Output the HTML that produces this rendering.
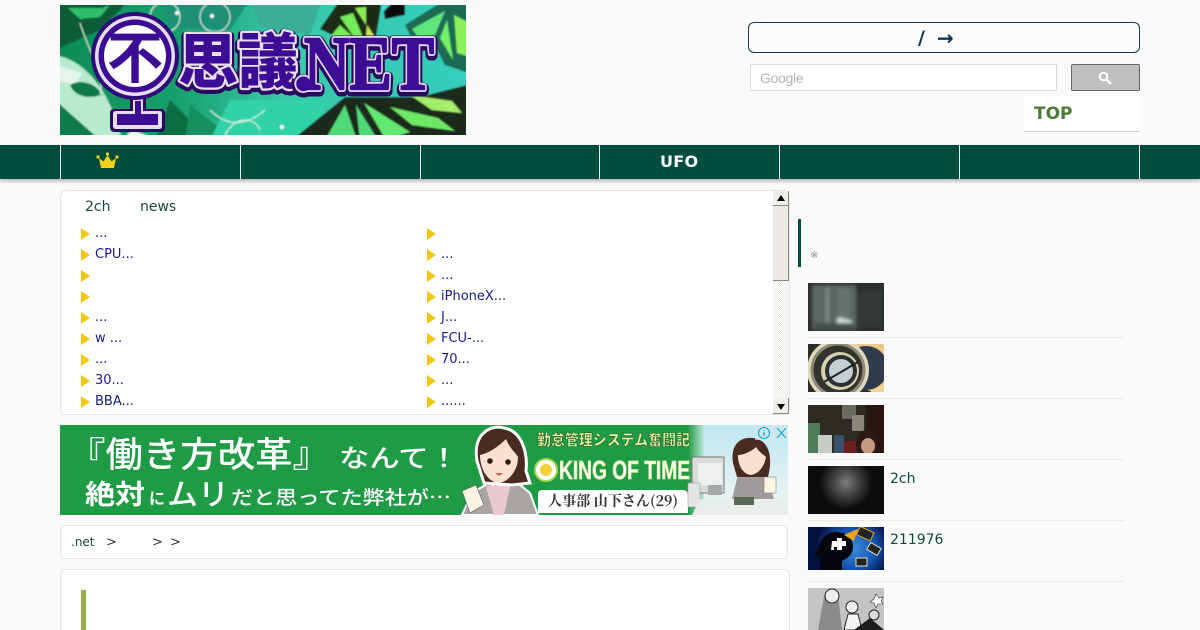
<!DOCTYPE html>
<html lang="ja"><head><meta charset="utf-8"><title>不思議.NET</title>
<style>
html,body{margin:0;padding:0;width:1200px;height:630px;overflow:hidden;background:#fafafa;font-family:"DejaVu Sans","Noto Sans CJK JP",sans-serif}
#w{position:relative;width:1200px;height:630px;overflow:hidden}
.a{position:absolute}
#nav{left:0;top:145px;width:1200px;height:34px;background:#004d40;box-shadow:0 2px 4px rgba(0,0,0,.3)}
#nav i{position:absolute;top:0;width:1px;height:34px;background:#e8efed}
.box{background:#fff;border:1px solid #e4e4e4;border-radius:6px;box-sizing:border-box}
.l{position:absolute;font-size:13px;line-height:18px;color:#1a1a8c;white-space:nowrap}
.t{position:absolute;width:0;height:0;margin-top:-1px;border-left:9px solid #f3c614;border-top:6.5px solid transparent;border-bottom:6.5px solid transparent}
.sep{position:absolute;left:808px;width:316px;height:1px;background:#e9e9e9}
.th{position:absolute;left:808px;width:76px;overflow:hidden}
.s{position:absolute;left:890px;font-size:14px;line-height:20px;color:#0d4a3d}
</style></head><body><div id="w">

<!-- logo -->
<svg class="a" style="left:60px;top:5px" width="406" height="130" viewBox="0 0 406 130">
<defs>
<linearGradient id="bg" x1="0" y1="0" x2="1" y2="0"><stop offset="0" stop-color="#0d8a52"/><stop offset=".3" stop-color="#17a06e"/><stop offset=".55" stop-color="#38c9a8"/><stop offset="1" stop-color="#34cdbd"/></linearGradient>
<filter id="bl" x="-5%" y="-5%" width="110%" height="110%"><feGaussianBlur stdDeviation=".7"/></filter>
<clipPath id="lc"><rect width="406" height="130"/></clipPath>
</defs>
<g clip-path="url(#lc)"><g filter="url(#bl)">
<rect x="-10" y="-10" width="426" height="150" fill="url(#bg)"/>
<path d="M-5 -5H70L40 25 -5 45Z" fill="#0a5c38"/><path d="M8 3H42L50 0 40 12 20 14Z" fill="#2fbf6d"/>
<path d="M-5 50C25 55 50 85 62 135H-5Z" fill="#b8ead0"/><path d="M-5 95L40 135H-5Z" fill="#0d7c48"/><path d="M-5 60L22 68 15 80 -5 75Z" fill="#e4f6ec"/>
<path d="M10 80C22 73 38 80 42 90 28 94 15 92 10 80Z" fill="#0e7a45"/>
<path d="M95 135L110 95 150 135Z" fill="#0c6d42"/><path d="M125 135L130 100 175 135Z" fill="#13905e"/><path d="M62 135L72 125 100 135Z" fill="#e8f6ee"/>
<path d="M100 -5H190L170 25 110 22Z" fill="#1f8f74"/><path d="M190 -5H262L250 30 200 22Z" fill="#3aae96"/>
<path d="M170 95H270L240 135H150Z" fill="#33d2a8"/>
<g fill="none" stroke="#dff5ea" stroke-width="1"><circle cx="105" cy="12" r="15"/><circle cx="155" cy="12" r="15"/><path d="M150 105C170 125 190 118 205 105"/><path d="M20 18C30 50 45 70 40 90"/><path d="M165 130C175 110 195 112 200 125"/></g>
<circle cx="117" cy="8" r="2" fill="#fff"/><circle cx="152" cy="11" r="2" fill="#fff"/><circle cx="222" cy="122" r="2" fill="#fff"/>
<!-- butterflies -->
<path d="M260 24L280 -5H322L316 32 285 36Z" fill="#1f2a15"/>
<path d="M270 32L280 20 293 32Z" fill="#74ec5a"/><path d="M280 12L293 8 303 32H294Z" fill="#74ec5a"/><path d="M295 3L306 2 306 20Z" fill="#8cec55"/><path d="M307 20L315 32H306Z" fill="#c8e85a"/>
<path d="M345 20L385 -5H415V70L385 60 372 35 350 30Z" fill="#1a6a52"/><path d="M352 24L385 6 375 30 358 32Z" fill="#5fe67a"/><path d="M387 15L393 55 380 33Z" fill="#73f06a"/><path d="M394 10L410 18V52L397 48Z" fill="#8cf05a"/>
<path d="M322 -5H345V10L325 14Z" fill="#111"/><path d="M320 -5H335L322 8Z" fill="#3ad7d2"/>
<path d="M232 135L285 92H360L415 78V135Z" fill="#1a2a1d"/>
<path d="M265 135L285 100 297 135Z" fill="#4fdc78"/><path d="M300 135L296 100 318 135Z" fill="#4fdc78"/><path d="M326 135L304 98 350 127Z" fill="#62e86f"/><path d="M330 102L378 113 395 126 352 120Z" fill="#6ee965"/><path d="M350 90L392 96 402 108 372 105Z" fill="#a4ef6a"/>
</g></g>
<!-- globe -->
<path d="M70 90H86V104H101Q105 104 105 108V122Q105 127 100 127H55Q50 127 50 122V108Q50 104 54 104H70Z" fill="#2a0a5e"/>
<path d="M73 92H83V106H100Q102 106 102 109V121Q102 124 99 124H56Q53 124 53 121V109Q53 106 56 106H73Z" fill="#e6dcee"/>
<path d="M75 96H81V109H98V120H57V109H75Z" fill="#3d0c94"/>
<circle cx="75" cy="51" r="44" fill="#2f0a78"/>
<circle cx="75" cy="51" r="40" fill="#e6dcee"/>
<circle cx="75" cy="51" r="36.5" fill="#3d0c94"/>
<circle cx="75" cy="51" r="31" fill="#fff"/>
<text x="75" y="73" text-anchor="middle" font-size="56" font-weight="700" fill="#3d0c94" font-family="'Noto Sans CJK JP',sans-serif">不</text>
<!-- title -->
<g font-family="'Noto Sans CJK JP','Noto Serif CJK SC',sans-serif" font-weight="900" stroke-linejoin="round">
<g fill="#2a0a5e" stroke="#2a0a5e" stroke-width="9"><text x="118" y="80" font-size="60">思</text><text x="178" y="80" font-size="60">議</text></g>
<g fill="#e8e0f0" stroke="#e8e0f0" stroke-width="4.5"><text x="118" y="78" font-size="60">思</text><text x="178" y="78" font-size="60">議</text></g>
<g fill="#3d0c94"><text x="118" y="78" font-size="60">思</text><text x="178" y="78" font-size="60">議</text></g>
</g>
<g font-family="'Liberation Serif',serif" font-weight="700" stroke-linejoin="round">
<g fill="#2a0a5e" stroke="#2a0a5e" stroke-width="11"><text x="234" y="86" font-size="76">.</text><text x="244" y="86" font-size="76" textLength="130" lengthAdjust="spacingAndGlyphs">NET</text></g>
<g fill="#ddd3ea" stroke="#ddd3ea" stroke-width="6"><text x="234" y="84" font-size="76">.</text><text x="244" y="84" font-size="76" textLength="130" lengthAdjust="spacingAndGlyphs">NET</text></g>
<g fill="#3d0c94" stroke="#3d0c94" stroke-width="2.2"><text x="234" y="84" font-size="76">.</text><text x="244" y="84" font-size="76" textLength="130" lengthAdjust="spacingAndGlyphs">NET</text></g>
</g>
</svg>

<!-- top right -->
<div class="a" style="left:748px;top:22px;width:392px;height:31px;box-sizing:border-box;border:1px solid #0d3a4f;border-radius:6px;background:#fcfcfc"></div>
<div class="a" style="left:918px;top:27px;font-size:19px;line-height:22px;font-weight:700;color:#0d3350">/</div>
<div class="a" style="left:937px;top:27px;font-size:20px;line-height:22px;font-weight:700;color:#0d3350">→</div>
<div class="a" style="left:750px;top:64px;width:307px;height:27px;box-sizing:border-box;border:1px solid #d9d9d9;background:#fff"></div>
<div class="a" style="left:760px;top:70px;font-size:14px;line-height:17px;color:#b4b4b4;letter-spacing:-.3px;font-family:'Liberation Sans',sans-serif">Google</div>
<div class="a" style="left:1071px;top:64px;width:69px;height:27px;box-sizing:border-box;border:1px solid #666;border-radius:2px;background:#c0c0c0"></div>
<svg class="a" style="left:1098px;top:71px" width="15" height="15" viewBox="0 0 15 15"><circle cx="5.5" cy="5.5" r="3.8" fill="none" stroke="#fff" stroke-width="2"/><path d="M8.5 8.5L13 13" stroke="#fff" stroke-width="2.4"/></svg>
<div class="a" style="left:1024px;top:96px;width:116px;height:36px;box-sizing:border-box;background:#fff;border-bottom:1px solid #ccc"></div>
<div class="a" style="left:1034px;top:104px;font-size:17px;line-height:21px;font-weight:700;color:#4e7a3a">TOP</div>

<!-- nav -->
<div id="nav" class="a">
<i style="left:60px"></i><i style="left:240px"></i><i style="left:420px"></i><i style="left:599px"></i><i style="left:779px"></i><i style="left:959px"></i><i style="left:1139px"></i>
<div class="a" style="left:660px;top:7px;font-size:16px;line-height:20px;font-weight:700;color:#fff;letter-spacing:.3px">UFO</div>
<svg class="a" style="left:96px;top:7px" width="23" height="17" viewBox="0 0 23 17"><path d="M5 16H18L20 6 15.5 9.5 11.5 3 7.5 9.5 3 6Z" fill="#f6d21a"/><circle cx="11.5" cy="2" r="1.6" fill="#f6d21a"/><circle cx="2" cy="5" r="1.6" fill="#f6d21a"/><circle cx="21" cy="5" r="1.6" fill="#f6d21a"/></svg>
</div>

<!-- list box -->
<div class="a box" style="left:60px;top:190px;width:730px;height:225px"></div>
<div class="a" style="left:85px;top:198px;font-size:14px;line-height:18px;color:#1a4a3e">2ch</div>
<div class="a" style="left:140px;top:198px;font-size:14px;line-height:18px;color:#1a4a3e">news</div>

<i class="t" style="left:81px;top:229px"></i><div class="l" style="left:95px;top:225px">...</div>
<i class="t" style="left:81px;top:250px"></i><div class="l" style="left:95px;top:246px">CPU...</div>
<i class="t" style="left:81px;top:271px"></i>
<i class="t" style="left:81px;top:292px"></i>
<i class="t" style="left:81px;top:313px"></i><div class="l" style="left:95px;top:309px">...</div>
<i class="t" style="left:81px;top:334px"></i><div class="l" style="left:95px;top:330px">w ...</div>
<i class="t" style="left:81px;top:355px"></i><div class="l" style="left:95px;top:351px">...</div>
<i class="t" style="left:81px;top:376px"></i><div class="l" style="left:95px;top:372px">30...</div>
<i class="t" style="left:81px;top:397px"></i><div class="l" style="left:95px;top:393px">BBA...</div>

<i class="t" style="left:427px;top:229px"></i>
<i class="t" style="left:427px;top:250px"></i><div class="l" style="left:441px;top:246px">...</div>
<i class="t" style="left:427px;top:271px"></i><div class="l" style="left:441px;top:267px">...</div>
<i class="t" style="left:427px;top:292px"></i><div class="l" style="left:441px;top:288px">iPhoneX...</div>
<i class="t" style="left:427px;top:313px"></i><div class="l" style="left:441px;top:309px">J...</div>
<i class="t" style="left:427px;top:334px"></i><div class="l" style="left:441px;top:330px">FCU-...</div>
<i class="t" style="left:427px;top:355px"></i><div class="l" style="left:441px;top:351px">70...</div>
<i class="t" style="left:427px;top:376px"></i><div class="l" style="left:441px;top:372px">...</div>
<i class="t" style="left:427px;top:397px"></i><div class="l" style="left:441px;top:393px">......</div>

<!-- scrollbar -->
<div class="a" style="left:773px;top:191px;width:16px;height:223px;background:repeating-conic-gradient(#ecebe6 0 25%,#fff 0 50%) 0 0/2px 2px"></div>
<div class="a" style="left:773px;top:191px;width:16px;height:15px;background:#f0eee9;box-sizing:border-box;border-right:1px solid #888;border-bottom:1px solid #888"></div>
<div class="a" style="left:777px;top:195px;width:0;height:0;border-left:4.5px solid transparent;border-right:4.5px solid transparent;border-bottom:6px solid #000"></div>
<div class="a" style="left:773px;top:206px;width:16px;height:75px;background:#ece9e4;box-sizing:border-box;border-right:1px solid #888;border-bottom:1px solid #888"></div>
<div class="a" style="left:773px;top:398px;width:16px;height:16px;background:#f0eee9;box-sizing:border-box;border-right:1px solid #888;border-bottom:1px solid #888"></div>
<div class="a" style="left:777px;top:404px;width:0;height:0;border-left:4.5px solid transparent;border-right:4.5px solid transparent;border-top:6px solid #000"></div>

<!-- ad -->
<svg class="a" style="left:60px;top:425px" width="728" height="90" viewBox="0 0 728 90">
<defs><linearGradient id="sky" x1="0" y1="0" x2="0" y2="1"><stop offset="0" stop-color="#bfe6f2"/><stop offset="1" stop-color="#f2f7f2"/></linearGradient>
<linearGradient id="fade" x1="0" y1="0" x2="1" y2="0"><stop offset="0" stop-color="#1f9b45"/><stop offset="1" stop-color="#bfe6d8"/></linearGradient></defs>
<rect width="728" height="90" fill="#1f9b45"/>
<rect x="632" width="96" height="90" fill="url(#sky)"/>
<rect x="628" width="16" height="90" fill="url(#fade)"/>
<g font-family="'Noto Sans CJK JP',sans-serif" fill="#fff" font-weight="500">
<text x="8" y="42" font-size="35" textLength="262" lengthAdjust="spacingAndGlyphs">『働き方改革』</text>
<text x="279" y="42" font-size="25" textLength="120" lengthAdjust="spacingAndGlyphs">なんて！</text>
</g>
<g font-family="'Noto Sans CJK JP',sans-serif" fill="#fff" font-weight="700">
<text x="25" y="79" font-size="27" textLength="60" lengthAdjust="spacingAndGlyphs">絶対</text>
<text x="89" y="79" font-size="16">に</text>
<text x="107" y="80" font-size="30" font-weight="500" textLength="62" lengthAdjust="spacingAndGlyphs">ムリ</text>
<text x="171" y="79" font-size="19" font-weight="500" textLength="220" lengthAdjust="spacingAndGlyphs">だと思ってた弊社が…</text>
</g>
<!-- woman -->
<path d="M402 90L412 68 432 56 455 56 470 68 478 90Z" fill="#a9a5a3" stroke="#fff" stroke-width="2"/>
<path d="M426 62L440 56 450 62 444 90H434Z" fill="#e9c9cf"/>
<path d="M417 36C412 8 432 -1 444 3 462 6 468 28 466 46L470 58 452 60 424 58Z" fill="#4a2b22" stroke="#fff" stroke-width="3"/>
<path d="M420 30C430 28 440 20 446 14 450 24 456 28 458 32 458 48 446 58 438 58 426 56 420 42 420 30Z" fill="#fbe1cf"/>
<circle cx="430" cy="36" r="2.8" fill="#2c1a14"/><circle cx="448" cy="37" r="2.8" fill="#2c1a14"/><path d="M435 48H443L439 51Z" fill="#c9605a"/>
<path d="M402 66L416 60 424 80 410 88Z" fill="#fdf4e4" stroke="#555" stroke-width=".6"/>
<!-- logo text -->
<text x="477" y="20" font-family="'Noto Sans CJK JP',sans-serif" font-weight="900" font-size="15" textLength="153" lengthAdjust="spacingAndGlyphs" fill="#f4f1a0" stroke="#1a6630" stroke-width=".6">勤怠管理システム奮闘記</text>
<circle cx="486" cy="45" r="11" fill="#fff" stroke="#a8d84a" stroke-width="2"/><circle cx="486" cy="45" r="6" fill="#f3d23a"/>
<text x="499" y="54" font-family="'Liberation Sans',sans-serif" font-weight="700" font-size="26" textLength="131" lengthAdjust="spacingAndGlyphs" fill="#fff" stroke="#d6e88a" stroke-width=".8">KING OF TIME</text>
<path d="M478 90V69Q478 65 483 65H622Q628 65 628 70V88H478Z" fill="#fff"/>
<text x="488" y="81" font-family="'Noto Serif CJK JP',serif" font-weight="700" font-size="14.5" textLength="130" lengthAdjust="spacingAndGlyphs" fill="#333">人事部 山下さん(29)</text>
<!-- right scene -->
<rect x="632" y="32" width="32" height="36" fill="#d8dcdc" stroke="#777"/><rect x="638" y="38" width="24" height="22" fill="#eef0f0"/>
<rect x="628" y="58" width="12" height="24" fill="#e4e6e6" stroke="#999" stroke-width=".6"/><rect x="648" y="60" width="14" height="10" fill="#a5a8a8"/>
<path d="M640 74H728V90H632Z" fill="#e8eeea"/>
<path d="M672 74L678 50 692 46 707 52 714 74Z" fill="#a09a9a"/>
<path d="M673 38C670 18 682 12 692 13 707 14 714 28 708 52L677 52Z" fill="#4a2b22"/>
<path d="M678 30C684 30 692 26 696 22 700 28 704 30 706 32 704 44 696 50 690 50 682 48 678 40 678 30Z" fill="#fbe1cf"/>
<rect x="704" y="52" width="12" height="16" fill="#fdf4e4" stroke="#777" stroke-width=".5"/>
<rect x="674" y="72" width="20" height="8" fill="#5a6a55"/>
<!-- adchoices -->
<rect x="695" width="33" height="15" fill="#d6e6ea" opacity=".7"/>
<circle cx="704" cy="8" r="5.5" fill="none" stroke="#00aecd" stroke-width="1.1"/><path d="M704 5V5.8M704 7V11" stroke="#00aecd" stroke-width="1.2"/>
<path d="M717 3L726 13M726 3L717 13" stroke="#00aecd" stroke-width="1.1"/>
</svg>

<!-- breadcrumb -->
<div class="a box" style="left:60px;top:525px;width:728px;height:34px"></div>
<div class="a" style="left:71px;top:533px;font-size:12px;line-height:18px;color:#1a4a3e">.net</div>
<div class="a" style="left:106px;top:534px;font-size:13px;line-height:18px;color:#333">&gt;</div>
<div class="a" style="left:152px;top:534px;font-size:13px;line-height:18px;color:#333">&gt;</div>
<div class="a" style="left:170px;top:534px;font-size:13px;line-height:18px;color:#333">&gt;</div>

<!-- article -->
<div class="a box" style="left:60px;top:569px;width:730px;height:80px"></div>
<div class="a" style="left:81px;top:590px;width:5px;height:40px;background:#96b050"></div>

<!-- sidebar -->
<div class="a" style="left:798px;top:219px;width:3px;height:48px;background:#004d40"></div>
<div class="a" style="left:810px;top:249px;font-size:10px;line-height:14px;color:#888">※</div>

<div class="th" style="top:283px;height:48px;background:#2b302f">
<svg width="76" height="48" viewBox="0 0 76 48" style="display:block"><defs><filter id="b2"><feGaussianBlur stdDeviation="1.5"/></filter></defs><g filter="url(#b2)"><rect x="4" y="2" width="44" height="44" fill="#5b6663"/><rect x="18" y="4" width="3" height="36" fill="#7e8b88"/><rect x="30" y="6" width="12" height="34" fill="#66726f"/><rect x="48" y="8" width="26" height="36" fill="#333938"/><path d="M28 42L30 34 44 38 46 44Z" fill="#d4dedb"/><rect x="6" y="40" width="40" height="8" fill="#454e4c"/></g></svg></div>
<div class="sep" style="top:337px"></div>
<div class="th" style="top:344px;height:48px;background:#2c2c28">
<svg width="76" height="48" viewBox="0 0 76 48" style="display:block"><circle cx="70" cy="18" r="30" fill="#f0c88a"/><circle cx="58" cy="24" r="22" fill="#2f3a4c"/><circle cx="30" cy="26" r="31" fill="#e0d8bc"/><circle cx="30" cy="26" r="26" fill="#34342f" stroke="#8c8a78" stroke-width="3"/><circle cx="32" cy="27" r="19" fill="#d4d0b0"/><circle cx="33" cy="27" r="16" fill="#2d3033"/><circle cx="33" cy="27" r="12" fill="#c6cfd2"/><path d="M16 38L50 18" stroke="#222" stroke-width="2"/><path d="M62 48L76 40V48Z" fill="#f5d29a"/></svg></div>
<div class="sep" style="top:398px"></div>
<div class="th" style="top:405px;height:48px;background:#2c2a22">
<svg width="76" height="48" viewBox="0 0 76 48" style="display:block"><rect x="58" width="18" height="48" fill="#2a1610"/><rect x="34" y="0" width="14" height="14" fill="#6a6a60"/><rect x="44" y="10" width="12" height="16" fill="#8a8576"/><rect x="0" y="18" width="12" height="30" fill="#4e7c5a"/><rect x="10" y="30" width="14" height="18" fill="#c6cdc6"/><rect x="26" y="30" width="10" height="18" fill="#39506e"/><rect x="36" y="36" width="12" height="12" fill="#6e2020"/><ellipse cx="59" cy="38" rx="11" ry="13" fill="#2e1a14"/><ellipse cx="60" cy="41" rx="7" ry="8" fill="#c59a82"/></svg></div>
<div class="sep" style="top:459px"></div>
<div class="th" style="top:466px;height:48px;background:radial-gradient(ellipse 35% 55% at 50% 35%,#7c7c7c 0,#363636 60%,#0c0c0c 100%)"></div>
<div class="s" style="top:469px">2ch</div>
<div class="sep" style="top:520px"></div>
<div class="th" style="top:527px;height:43px;background:radial-gradient(ellipse 50% 80% at 60% 50%,#3a8ee0 0,#1450b0 60%,#051040 100%)">
<svg width="76" height="43" viewBox="0 0 76 43" style="position:absolute;left:0;top:0"><path d="M12 43V32L7 27 13 14C20 1 42 2 45 18 46 28 38 32 34 34V43Z" fill="#06060e"/><path d="M24 14h5v-3h5v3h4v5h-4v4h-5v-3h-3v3h-3z" fill="#fff"/><path d="M36 8L50 2 46 14Z" fill="#eda51a"/><rect x="50" y="2" width="15" height="9" fill="#222" stroke="#eda51a" transform="rotate(25 57 6)"/><rect x="60" y="18" width="12" height="8" fill="#222" stroke="#ddb" transform="rotate(30 66 22)"/><rect x="48" y="31" width="11" height="8" fill="#222" stroke="#ddb"/></svg></div>
<div class="s" style="top:530px">211976</div>
<div class="sep" style="top:581px"></div>
<div class="th" style="top:588px;height:42px;background:#bbb">
<svg width="76" height="42" viewBox="0 0 76 42" style="position:absolute;left:0;top:0"><rect width="76" height="42" fill="#c4c4c4"/><path d="M10 42L16 8 30 6 34 42Z" fill="#8c8c8c"/><circle cx="24" cy="8" r="7" fill="#eee" stroke="#222"/><circle cx="44" cy="19" r="6" fill="#eee" stroke="#222"/><path d="M36 42L40 26 50 26 54 42Z" fill="#f4f4f4" stroke="#222"/><circle cx="66" cy="27" r="5" fill="#ddd" stroke="#222"/><path d="M46 42L62 30 76 42Z" fill="#1c1c1c"/><path d="M68 6l3 4 4-1-2 4 2 3-5 0-2 4-2-5-4-1 4-3z" fill="#fff" stroke="#333" stroke-width=".6"/></svg></div>

</div></body></html>
